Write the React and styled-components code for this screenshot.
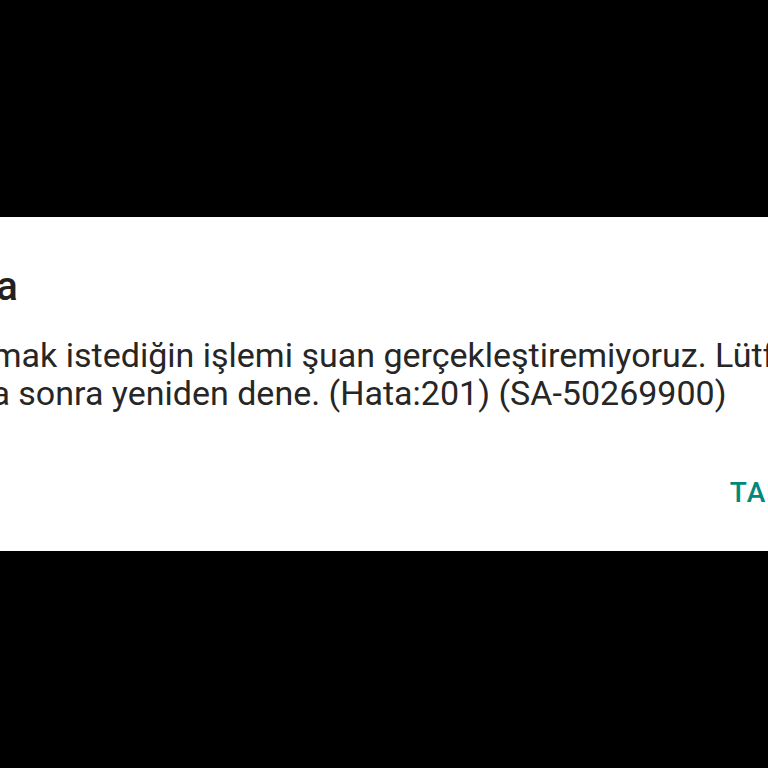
import React from 'react';
import styled, { createGlobalStyle } from 'styled-components';

const GlobalStyle = createGlobalStyle`
	html, body {
		margin: 0;
		padding: 0;
		background: #000;
		overflow: hidden;
	}
`;

const Screen = styled.div`
	height: 100vh;
	display: flex;
	align-items: center;
	justify-content: center;
	overflow: hidden;
	background: #000;
	font-family: Roboto, 'Noto Sans', sans-serif;
`;

const Dialog = styled.div`
	flex: 0 0 984px;
	width: 984px;
	height: 334px;
	box-sizing: border-box;
	background: #fff;
	padding: 46px 23px 0 44px;
	display: flex;
	flex-direction: column;
`;

const Title = styled.h2`
	margin: 0 0 0 -3px;
	font-size: 40px;
	line-height: 48px;
	font-weight: 500;
	color: #212121;
`;

const Message = styled.p`
	margin: 25px 0 0 -1px;
	font-size: 34px;
	line-height: 38px;
	font-weight: 400;
	color: #262626;
	white-space: nowrap;
`;

const Actions = styled.div`
	display: flex;
	justify-content: flex-end;
	margin-top: 65px;
`;

const TextButton = styled.button`
	border: none;
	background: none;
	padding: 0 16px;
	font-family: inherit;
	font-size: 28px;
	line-height: 32px;
	font-weight: 500;
	letter-spacing: 1px;
	color: #00897b;
	text-transform: uppercase;
	cursor: pointer;
`;

const App = () => {
	return (
		<Screen>
			<GlobalStyle />
			<Dialog>
				<Title>Hata</Title>
				<Message>
					Yapmak istediğin işlemi şuan gerçekleştiremiyoruz. Lütfen
					<br />
					daha sonra yeniden dene. (Hata:201) (SA-50269900)
				</Message>
				<Actions>
					<TextButton>Tamam</TextButton>
				</Actions>
			</Dialog>
		</Screen>
	);
};

export default App;
